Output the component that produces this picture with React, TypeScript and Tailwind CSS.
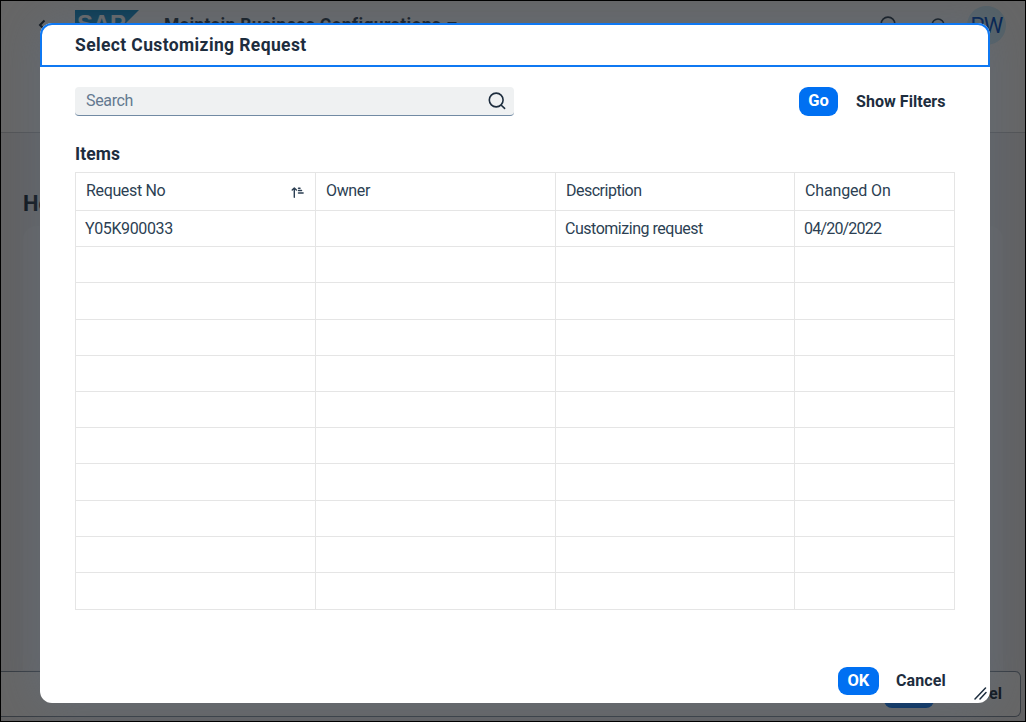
import React from "react";

const columns = ["Request No", "Owner", "Description", "Changed On"];

const rows: string[][] = [
  ["Y05K900033", "", "Customizing request", "04/20/2022"],
  ...Array.from({ length: 10 }, () => ["", "", "", ""]),
];

const headerSpacing: Record<string, string> = {
  "Request No": "tracking-[-0.35px]",
  Owner: "tracking-[-0.35px]",
  Description: "tracking-[-0.5px]",
  "Changed On": "tracking-[-0.15px]",
};

const cellSpacing = ["tracking-[-0.38px]", "", "tracking-[-0.48px]", "tracking-[-0.8px]"];

function SearchIcon() {
  return (
    <svg className="h-[18px] w-[18px]" viewBox="0 0 18 18" fill="none" stroke="currentColor" strokeWidth="1.6" strokeLinecap="round">
      <circle cx="8.2" cy="8" r="6.9" />
      <path d="M13.3 13.2 16.6 16.4" />
    </svg>
  );
}

function SortIcon() {
  return (
    <svg className="h-[13px] w-[13px]" viewBox="0 0 13 13" fill="none" stroke="currentColor" strokeWidth="1.4" strokeLinecap="round" strokeLinejoin="round">
      <path d="M3.3 11.3V2M1.2 4.1 3.3 2 5.4 4.1" />
      <path d="M7.5 2.3h1.5M7.5 4.6h3M7.5 6.9h4.6" strokeWidth="1.5" />
    </svg>
  );
}

function BackgroundPage() {
  return (
    <div className="flex h-full w-full flex-col bg-[#f4f6f7] text-[#1d2d3e]">
      <header className="h-[132px] shrink-0 border-b border-[#d0d3d7] bg-white">
        <div className="flex h-[48px] items-center pl-[37px] pr-[19px]">
          <svg className="h-[12px] w-[8px]" viewBox="0 0 8 12" fill="none" stroke="currentColor" strokeWidth="2">
            <path d="M6.5 1.5 2 6l4.5 4.5" />
          </svg>
          <div className="ml-[29px] h-[30px] w-[64px]">
            <svg className="h-[30px] w-[64px]" viewBox="0 0 64 30">
              <path d="M0 0H64L34 30H0Z" fill="#0e8ccb" />
              <text x="2" y="22" fill="#fff" fontFamily="Liberation Sans" fontSize="23" fontWeight="700" textLength="49" lengthAdjust="spacingAndGlyphs">SAP</text>
            </svg>
          </div>
          <span className="ml-[25px] whitespace-nowrap text-[17.5px] font-bold tracking-[0.35px]">Maintain Business Configurations</span>
          <svg className="ml-[6px] h-[6px] w-[10px]" viewBox="0 0 10 6">
            <path d="M0 0H10L5 5Z" fill="currentColor" />
          </svg>
          <div className="ml-auto flex items-center">
            <svg className="h-[18px] w-[18px]" viewBox="0 0 18 18" fill="none" stroke="currentColor" strokeWidth="1.6">
              <circle cx="8" cy="8" r="6.9" />
              <path d="m13 13 4 4" />
            </svg>
            <svg className="ml-[31px] mt-[3px] h-[18px] w-[18px]" viewBox="0 0 18 18" fill="none" stroke="currentColor" strokeWidth="1.6">
              <path d="M3 13V7a6 6 0 0 1 12 0v6ZM7 16h4" />
            </svg>
            <div className="ml-[20px] mt-[1px] flex h-[39px] w-[39px] items-center justify-center rounded-full bg-[#d1efff] text-[22px] tracking-[-0.8px] text-[#0050c8]">
              PW
            </div>
          </div>
        </div>
      </header>
      <main className="flex-1 px-[22px] pt-[56px]">
        <h1 className="h-[37px] text-[22px] font-bold leading-[29px]">Home</h1>
        <div className="h-[444px] rounded-t-[14px] bg-[#f9fbfc]" />
      </main>
      <footer className="mb-[4px] mr-[4px] flex h-[46px] shrink-0 items-center justify-end rounded-r-[6px] border border-l-0 border-[#8a96a6] bg-white pr-[18px]">
        <div className="mr-[19px] flex h-[28px] w-[50px] items-center justify-center rounded-lg bg-[#0070f2] text-[16px] font-bold text-white">Save</div>
        <span className="text-[16px] font-bold">Cancel</span>
      </footer>
    </div>
  );
}

function ItemsTable() {
  return (
    <div className="w-[880px] border border-[#e5e5e5] text-[16px] text-[#2c3f53]">
      <div className="grid h-[38px] grid-cols-[240px_240px_239px_159px] border-b border-[#e5e5e5]">
        {columns.map((name, i) => (
          <div key={name} className={"flex items-center justify-between pb-[1px] pl-[10px] pr-[11px] " + (i < 3 ? "border-r border-[#e5e5e5]" : "")}>
            <span className={headerSpacing[name]}>{name}</span>
            {i === 0 && <span className="mt-[3px]"><SortIcon /></span>}
          </div>
        ))}
      </div>
      {rows.map((row, r) => (
        <div key={r} className={"grid grid-cols-[240px_240px_239px_159px] " + (r < 10 ? "h-[36.2px] border-b border-[#e5e5e5]" : "h-[36.6px]")}>
          {row.map((cell, i) => (
            <div key={i} className={"flex items-center pl-[9px] " + cellSpacing[i] + (i < 3 ? " border-r border-[#e5e5e5]" : "")}>
              {cell}
            </div>
          ))}
        </div>
      ))}
    </div>
  );
}

function RequestDialog() {
  return (
    <section className="relative flex h-[680px] w-[950px] flex-col rounded-[12px] bg-white text-[#1d2d3e] shadow-[0_0_44px_2px_rgba(98,114,132,0.45)]">
      <header className="flex h-[44px] shrink-0 items-center rounded-t-[12px] border-2 border-[#0f78f2] pl-[33px]">
        <h2 className="text-[17.5px] font-bold tracking-[0.38px]">Select Customizing Request</h2>
      </header>
      <div className="flex flex-1 flex-col px-[35px] pt-[20px]">
        <div className="flex h-[29px] items-center">
          <div className="flex h-[29px] w-[439px] items-center justify-between rounded-[4px] border-b border-[#718aa3] bg-[#eff1f2] pl-[11px] pr-[8px]">
            <span className="text-[16px] tracking-[-0.35px] text-[#647990]">Search</span>
            <SearchIcon />
          </div>
          <button className="ml-[285px] flex h-[29px] w-[39px] items-center justify-center rounded-[9px] bg-[#0070f2] text-[16.5px] font-bold text-white">Go</button>
          <button className="ml-[18px] whitespace-nowrap text-[16px] font-bold tracking-[0.05px]">Show Filters</button>
        </div>
        <h3 className="mb-[5px] mt-[26px] h-[25px] text-[17.5px] font-bold leading-[25px] tracking-[0.1px]">Items</h3>
        <ItemsTable />
      </div>
      <footer className="flex h-[44px] shrink-0 items-start justify-end pr-[44px] pt-[8px]">
        <button className="mr-[17px] flex h-[28px] w-[41px] items-center justify-center rounded-[9px] bg-[#0070f2] text-[16.5px] font-bold text-white">OK</button>
        <button className="h-[28px] text-[16px] font-bold tracking-[0.15px]">Cancel</button>
      </footer>
      <svg className="absolute bottom-[3px] right-[3px] h-[13px] w-[13px]" viewBox="0 0 13 13" fill="none" stroke="currentColor" strokeWidth="1.5" strokeLinecap="round">
        <path d="M1 12 11.5 1M6 12l6-6.5" />
      </svg>
    </section>
  );
}

export default function App() {
  return (
    <div className="relative h-[722px] w-[1026px] overflow-hidden border border-black bg-[#f4f6f7] font-['Roboto','Noto_Sans',sans-serif] antialiased">
      <BackgroundPage />
      <div className="absolute inset-0 bg-black/60 pl-[39px] pt-[22px]">
        <RequestDialog />
      </div>
    </div>
  );
}
